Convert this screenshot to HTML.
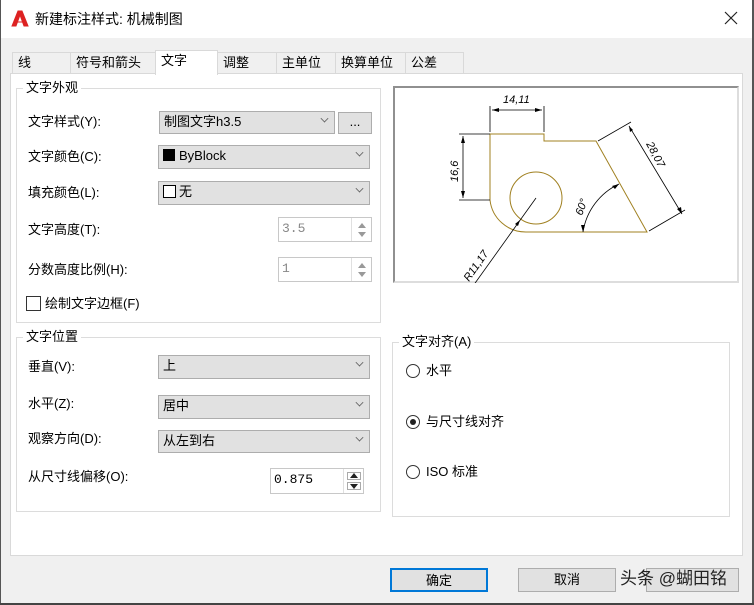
<!DOCTYPE html>
<html><head><meta charset="utf-8"><style>
*{margin:0;padding:0;box-sizing:border-box}
body{width:754px;height:605px;background:#f0f0f0;position:relative;overflow:hidden;font-family:"Liberation Sans","Noto Sans CJK SC",sans-serif;font-size:13px;color:#000}
.a{position:absolute}
.lbl{position:absolute;font-size:13px;line-height:16px;white-space:nowrap}
.cb{position:absolute;background:#e1e1e1;border:1px solid #adadad;font-size:13px;line-height:20px;padding-left:4px;white-space:nowrap}
.cb .ar{position:absolute;right:6px;top:6px;width:7px;height:7px;border-right:1px solid #606060;border-bottom:1px solid #606060;transform:rotate(45deg) scale(.8);top:3px}
.grp{position:absolute;border:1px solid #dcdcdc}
.gt{position:absolute;background:#fff;padding:0 3px;font-size:13px;line-height:16px;top:-9px;left:6px}
.spin{position:absolute;background:#fff;border:1px solid #c8c8c8;font-size:13px;line-height:22px;padding-left:3px;font-family:"Liberation Mono",monospace}
.spin .b{position:absolute;right:0;top:0;width:20px;height:100%;border-left:1px solid #e0e0e0}
.up,.dn{position:absolute;left:6px;width:0;height:0;border-left:4px solid transparent;border-right:4px solid transparent}
.tab{position:absolute;top:52px;height:21px;border:1px solid #d9d9d9;border-bottom:none;background:#f0f0f0;font-size:13px;line-height:19px;padding-left:5px}
.btn{position:absolute;background:#e1e1e1;border:1px solid #adadad;text-align:center;line-height:21px;font-size:13px}
.rad{position:absolute;width:14px;height:14px;border:1px solid #333;border-radius:50%;background:#fff}
</style></head><body>
<div class="a" style="left:0;top:0;width:754px;height:38px;background:#fff"></div>
<div class="a" style="left:0;top:0;width:1px;height:605px;background:#555"></div>
<div class="a" style="right:0;top:0;width:2px;height:605px;background:#555"></div>
<div class="a" style="left:0;bottom:0;width:754px;height:2px;background:#444"></div>
<svg class="a" style="left:11px;top:10px" width="18" height="17"><path d="M1 16 L7 1 L11 1 L17 16 L13 16 L9 5 L5 16Z M6 12 L12 12" fill="#d22" stroke="#d22" stroke-width="1"/></svg>
<div class="lbl" style="left:35px;top:11px;font-size:14px">新建标注样式: 机械制图</div>
<svg class="a" style="left:724px;top:11px" width="14" height="14"><path d="M1 1L13 13M13 1L1 13" stroke="#222" stroke-width="1.2"/></svg>

<div class="a" style="left:10px;top:73px;width:733px;height:483px;background:#fff;border:1px solid #d9d9d9"></div>
<div class="tab" style="left:12px;width:59px">线</div>
<div class="tab" style="left:70px;width:86px">符号和箭头</div>
<div class="tab" style="left:217px;width:60px">调整</div>
<div class="tab" style="left:276px;width:60px">主单位</div>
<div class="tab" style="left:335px;width:71px">换算单位</div>
<div class="tab" style="left:405px;width:59px">公差</div>
<div class="tab" style="left:155px;top:50px;width:63px;height:25px;background:#fff">文字</div>

<div class="grp" style="left:16px;top:88px;width:365px;height:235px"><div class="gt">文字外观</div></div>
<div class="lbl" style="left:28px;top:114px">文字样式(Y):</div>
<div class="cb" style="left:159px;top:111px;width:176px;height:23px">制图文字h3.5<div class="ar"></div></div>
<div class="btn" style="left:338px;top:112px;width:34px;height:22px;line-height:18px">...</div>
<div class="lbl" style="left:28px;top:149px">文字颜色(C):</div>
<div class="cb" style="left:158px;top:145px;width:212px;height:24px"><span style="display:inline-block;width:12px;height:12px;background:#000;vertical-align:-1px;margin-right:4px"></span>ByBlock<div class="ar"></div></div>
<div class="lbl" style="left:28px;top:185px">填充颜色(L):</div>
<div class="cb" style="left:158px;top:181px;width:212px;height:24px"><span style="display:inline-block;width:13px;height:13px;border:1px solid #000;background:#fff;vertical-align:-2px;margin-right:3px"></span>无<div class="ar"></div></div>
<div class="lbl" style="left:28px;top:222px">文字高度(T):</div>
<div class="spin" style="left:278px;top:217px;width:94px;height:25px;color:#888">3.5<div class="b"><div class="up" style="top:5px;border-bottom:5px solid #999"></div><div class="dn" style="top:14px;border-top:5px solid #999"></div></div></div>
<div class="lbl" style="left:28px;top:262px">分数高度比例(H):</div>
<div class="spin" style="left:278px;top:257px;width:94px;height:25px;color:#888">1<div class="b"><div class="up" style="top:5px;border-bottom:5px solid #999"></div><div class="dn" style="top:14px;border-top:5px solid #999"></div></div></div>
<div class="a" style="left:26px;top:296px;width:15px;height:15px;border:1px solid #333;background:#fff"></div>
<div class="lbl" style="left:45px;top:296px">绘制文字边框(F)</div>

<div class="grp" style="left:16px;top:337px;width:365px;height:175px"><div class="gt">文字位置</div></div>
<div class="lbl" style="left:28px;top:359px">垂直(V):</div>
<div class="cb" style="left:158px;top:355px;width:212px;height:24px">上<div class="ar"></div></div>
<div class="lbl" style="left:28px;top:396px">水平(Z):</div>
<div class="cb" style="left:158px;top:395px;width:212px;height:24px">居中<div class="ar"></div></div>
<div class="lbl" style="left:28px;top:431px">观察方向(D):</div>
<div class="cb" style="left:158px;top:430px;width:212px;height:23px">从左到右<div class="ar"></div></div>
<div class="lbl" style="left:28px;top:469px">从尺寸线偏移(O):</div>
<div class="spin" style="left:270px;top:468px;width:94px;height:26px">0.875<div class="b"><div class="a" style="left:3px;top:3px;width:14px;height:8px;border:1px solid #aaa"></div><div class="a" style="left:3px;top:13px;width:14px;height:8px;border:1px solid #aaa"></div><div class="up" style="top:4px;left:6px;border-bottom:5px solid #222"></div><div class="dn" style="top:15px;left:6px;border-top:5px solid #222"></div></div></div>

<div class="a" style="left:393px;top:86px;width:346px;height:197px;background:#fff;border:2px solid #909090;border-right-color:#ddd;border-bottom-color:#ddd"></div>
<svg class="a" style="left:393px;top:86px" width="346" height="197" font-family="Liberation Sans,sans-serif" font-size="11" font-style="italic">
<g fill="none" stroke="#a08020" stroke-width="1">
<path d="M97 48 V114 A36 36 0 0 0 133 146 L254 146 L203 55 L151 55 L151 48 Z"/>
<circle cx="143" cy="112" r="26"/>
</g>
<g fill="none" stroke="#000" stroke-width="0.8">
<path d="M97 46 V20 M151 46 V20 M99 24 H149"/>
<path d="M97 48 H66 M97 114 H66 M70 50 V112"/>
<path d="M205 55 L238 36 M256 145 L292 124 M236 40 L289 128"/>
<path d="M143 112 L80 200"/>
<path d="M190 146 A64 64 0 0 1 226 98"/>
</g>
<g fill="#000"><path d="M99 24l7-2v4z M149 24l-7-2v4z M70 50l-2 7h4z M70 112l-2-7h4z M289 128l-5-5 4-2z M236 40l1 6 3-2z M190 146l-2-7h4z M226 98l-7 2 3 3z M127 134l-5 4 3 2z"/></g>
<text x="110" y="17">14,11</text>
<text transform="translate(65 96) rotate(-90)">16,6</text>
<text transform="translate(253 58) rotate(62)">28,07</text>
<text transform="translate(189 130) rotate(-70)">60°</text>
<text transform="translate(76 196) rotate(-55)">R11,17</text>
</svg>

<div class="grp" style="left:392px;top:342px;width:338px;height:175px"><div class="gt">文字对齐(A)</div></div>
<div class="rad" style="left:406px;top:364px"></div>
<div class="lbl" style="left:426px;top:363px">水平</div>
<div class="rad" style="left:406px;top:415px"><div class="a" style="left:3px;top:3px;width:6px;height:6px;border-radius:50%;background:#222"></div></div>
<div class="lbl" style="left:426px;top:414px">与尺寸线对齐</div>
<div class="rad" style="left:406px;top:465px"></div>
<div class="lbl" style="left:426px;top:464px">ISO 标准</div>

<div class="btn" style="left:390px;top:568px;width:98px;height:24px;border:2px solid #0078d7">确定</div>
<div class="btn" style="left:518px;top:568px;width:98px;height:24px">取消</div>
<div class="btn" style="left:646px;top:568px;width:93px;height:24px"></div>
<div class="lbl" style="left:620px;top:569px;font-size:17px;line-height:20px;color:#222">头条 @蝴田铭</div>
</body></html>
